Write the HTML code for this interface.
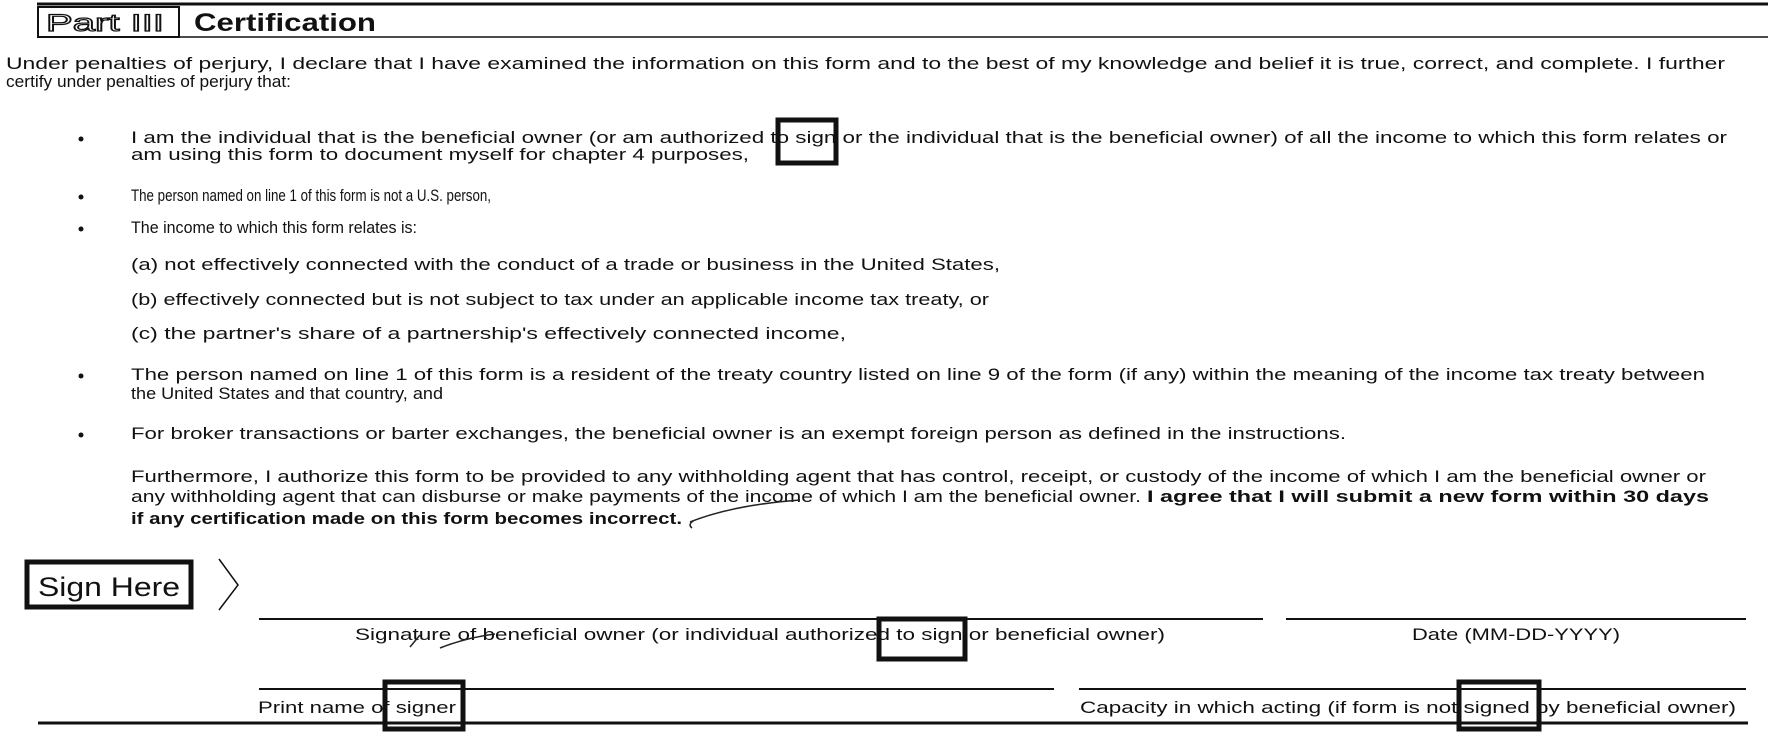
<!DOCTYPE html>
<html><head><meta charset="utf-8"><style>html,body{margin:0;padding:0;background:#fff}svg{display:block}</style></head><body>
<svg width="1768" height="732" viewBox="0 0 1768 732" xmlns="http://www.w3.org/2000/svg" font-family="Liberation Sans, Arial, sans-serif" fill="#111">
<rect width="1768" height="732" fill="#fff"/>
<line x1="37" y1="4" x2="1768" y2="4" stroke="#111" stroke-width="3"/>
<rect x="38" y="7" width="141" height="30" fill="none" stroke="#111" stroke-width="2"/>
<text x="46" y="31" font-size="24" fill="none" stroke="#111" stroke-width="1.2" textLength="118" lengthAdjust="spacingAndGlyphs">Part III</text>
<line x1="180" y1="37" x2="1768" y2="37" stroke="#111" stroke-width="1.5"/>
<text x="194" y="31" font-size="25" font-weight="bold" textLength="182" lengthAdjust="spacingAndGlyphs">Certification</text>
<g font-size="17" lengthAdjust="spacingAndGlyphs">
<text x="6" y="69" textLength="1719" lengthAdjust="spacingAndGlyphs">Under penalties of perjury, I declare that I have examined the information on this form and to the best of my knowledge and belief it is true, correct, and complete. I further</text>
<text x="6" y="87" textLength="285" lengthAdjust="spacingAndGlyphs">certify under penalties of perjury that:</text>
<text x="131" y="143" textLength="1596" lengthAdjust="spacingAndGlyphs">I am the individual that is the beneficial owner (or am authorized to sign or the individual that is the beneficial owner) of all the income to which this form relates or</text>
<text x="131" y="160" textLength="618" lengthAdjust="spacingAndGlyphs">am using this form to document myself for chapter 4 purposes,</text>
<text x="131" y="201" textLength="360" lengthAdjust="spacingAndGlyphs">The person named on line 1 of this form is not a U.S. person,</text>
<text x="131" y="233" textLength="286" lengthAdjust="spacingAndGlyphs">The income to which this form relates is:</text>
<text x="131" y="270" textLength="869" lengthAdjust="spacingAndGlyphs">(a) not effectively connected with the conduct of a trade or business in the United States,</text>
<text x="131" y="305" textLength="858" lengthAdjust="spacingAndGlyphs">(b) effectively connected but is not subject to tax under an applicable income tax treaty, or</text>
<text x="131" y="339" textLength="715" lengthAdjust="spacingAndGlyphs">(c) the partner's share of a partnership's effectively connected income,</text>
<text x="131" y="380" textLength="1574" lengthAdjust="spacingAndGlyphs">The person named on line 1 of this form is a resident of the treaty country listed on line 9 of the form (if any) within the meaning of the income tax treaty between</text>
<text x="131" y="399" textLength="312" lengthAdjust="spacingAndGlyphs">the United States and that country, and</text>
<text x="131" y="439" textLength="1215" lengthAdjust="spacingAndGlyphs">For broker transactions or barter exchanges, the beneficial owner is an exempt foreign person as defined in the instructions.</text>
<text x="131" y="482" textLength="1575" lengthAdjust="spacingAndGlyphs">Furthermore, I authorize this form to be provided to any withholding agent that has control, receipt, or custody of the income of which I am the beneficial owner or</text>
<text x="131" y="502" textLength="1010" lengthAdjust="spacingAndGlyphs">any withholding agent that can disburse or make payments of the income of which I am the beneficial owner.</text>
<text x="1147" y="502" font-weight="bold" textLength="562" lengthAdjust="spacingAndGlyphs">I agree that I will submit a new form within 30 days</text>
<text x="131" y="524" font-weight="bold" textLength="551" lengthAdjust="spacingAndGlyphs">if any certification made on this form becomes incorrect.</text>
<text x="355" y="640" textLength="810" lengthAdjust="spacingAndGlyphs">Signature of beneficial owner (or individual authorized to sign or beneficial owner)</text>
<text x="1412" y="640" textLength="208" lengthAdjust="spacingAndGlyphs">Date (MM-DD-YYYY)</text>
<text x="258" y="713" textLength="198" lengthAdjust="spacingAndGlyphs">Print name of signer</text>
<text x="1080" y="713" textLength="656" lengthAdjust="spacingAndGlyphs">Capacity in which acting (if form is not signed by beneficial owner)</text>
</g>
<g fill="#111">
<circle cx="81" cy="139" r="2.5"/><circle cx="81" cy="197" r="2.5"/><circle cx="81" cy="229" r="2.5"/><circle cx="81" cy="376" r="2.5"/><circle cx="81" cy="435" r="2.5"/>
</g>
<path d="M690 522 C720 510 760 503 800 500 M695 520 q-8 4 -3 8" fill="none" stroke="#222" stroke-width="1.5"/>
<rect x="27" y="562" width="164" height="45" fill="none" stroke="#111" stroke-width="5"/>
<text x="38" y="596" font-size="27" textLength="142" lengthAdjust="spacingAndGlyphs">Sign Here</text>
<path d="M219 559 L238 585 L219 610" fill="none" stroke="#111" stroke-width="1.5"/>
<line x1="259" y1="619" x2="1263" y2="619" stroke="#111" stroke-width="2"/>
<line x1="1286" y1="619" x2="1746" y2="619" stroke="#111" stroke-width="2"/>
<line x1="259" y1="689" x2="1054" y2="689" stroke="#111" stroke-width="2"/>
<line x1="1079" y1="689" x2="1746" y2="689" stroke="#111" stroke-width="2"/>
<line x1="38" y1="723" x2="1748" y2="723" stroke="#111" stroke-width="3"/>
<path d="M410 647 l10 -12 M440 648 q25 -10 55 -14" fill="none" stroke="#222" stroke-width="1.5"/>
<g fill="none" stroke="#111" stroke-width="5">
<rect x="778" y="120" width="58" height="43"/>
<rect x="879" y="619" width="86" height="40"/>
<rect x="385" y="682" width="78" height="47"/>
<rect x="1459" y="682" width="80" height="47"/>
</g>
</svg>
</body></html>
